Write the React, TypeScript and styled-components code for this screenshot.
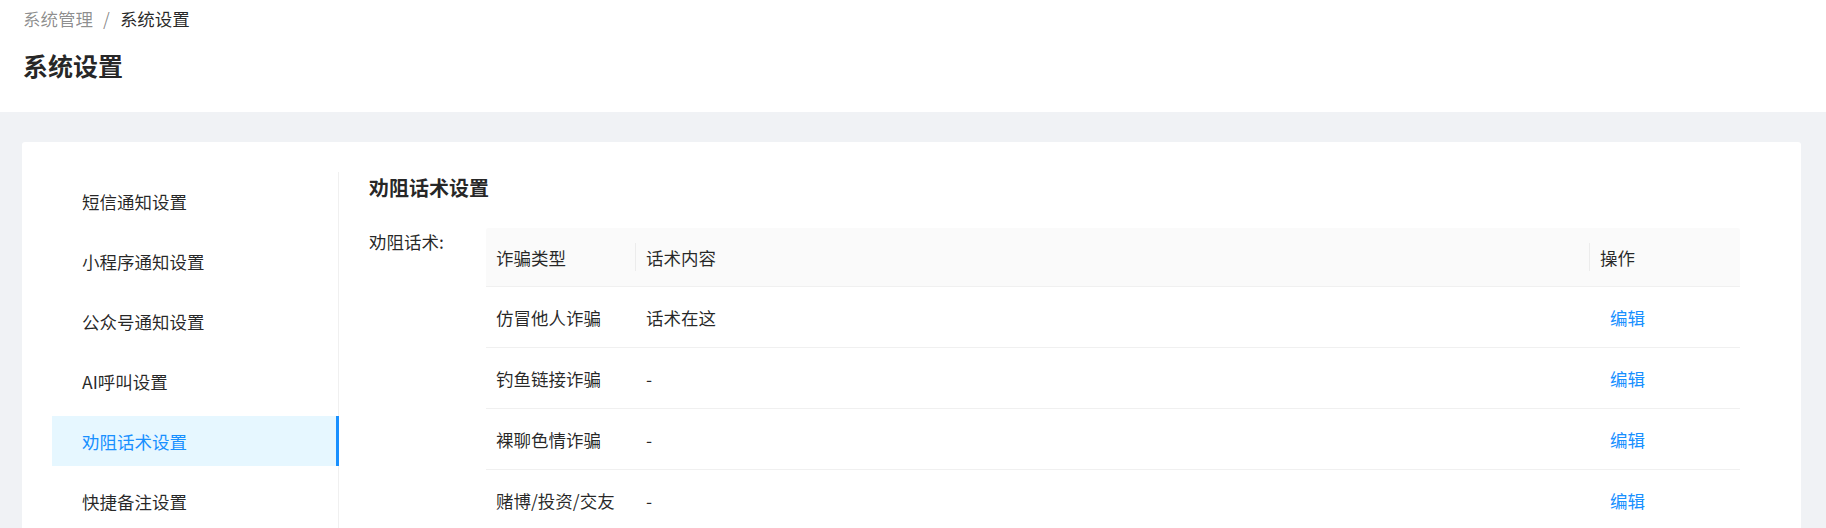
import React from "react";
import styled, { createGlobalStyle } from "styled-components";

const Global = createGlobalStyle`
  html, body { margin: 0; padding: 0; }
  body {
    background: #f0f2f5;
    font-family: "Noto Sans CJK SC", "Noto Sans", sans-serif;
    color: rgba(0,0,0,0.85);
    overflow: hidden;
  }
  * { box-sizing: border-box; }
`;

const Header = styled.header`
  background: #fff;
  height: 112px;
  padding: 5px 23px 0;
`;

const Breadcrumb = styled.div`
  display: flex;
  align-items: center;
  font-size: 17.5px;
  line-height: 27px;
`;

const Crumb = styled.span<{ $current?: boolean }>`
  color: ${(p) => (p.$current ? "rgba(0,0,0,0.85)" : "rgba(0,0,0,0.45)")};
`;

const CrumbSep = styled.span`
  color: rgba(0,0,0,0.45);
  margin: 0 10px;
`;

const PageTitle = styled.h1`
  margin: 16px 0 0;
  font-size: 25px;
  line-height: 35px;
  font-weight: 700;
  color: rgba(0,0,0,0.85);
`;

const Main = styled.main`
  padding: 30px 25px 0 22px;
`;

const Card = styled.section`
  background: #fff;
  border-radius: 3px;
  padding: 30px 61px 0 30px;
  display: flex;
  min-height: 400px;
`;

const Menu = styled.nav`
  width: 287px;
  border-right: 1px solid #f0f0f0;
  display: flex;
  flex-direction: column;
  gap: 10px;
  padding-top: 4px;
  flex-shrink: 0;
`;

const MenuItem = styled.div<{ $active?: boolean }>`
  height: 50px;
  display: flex;
  align-items: center;
  padding-left: 30px;
  margin-right: -1px;
  font-size: 17.5px;
  color: ${(p) => (p.$active ? "#1890ff" : "rgba(0,0,0,0.85)")};
  background: ${(p) => (p.$active ? "#e6f7ff" : "transparent")};
  border-right: 3px solid ${(p) => (p.$active ? "#1890ff" : "transparent")};
`;

const Content = styled.div`
  flex: 1;
  padding-left: 30px;
`;

const SectionTitle = styled.h2`
  margin: 2px 0 0;
  font-size: 20px;
  line-height: 28px;
  font-weight: 700;
  color: rgba(0,0,0,0.85);
`;

const FormRow = styled.div`
  display: flex;
  margin-top: 26px;
`;

const Label = styled.div`
  width: 117px;
  flex-shrink: 0;
  font-size: 17.5px;
  line-height: 27px;
  color: rgba(0,0,0,0.85);
`;

const Table = styled.div`
  flex: 1;
  display: grid;
  grid-template-columns: 149px 1fr 151px;
`;

const HeadCell = styled.div<{ $sep?: boolean }>`
  position: relative;
  background: #fafafa;
  height: 59px;
  border-bottom: 1px solid #f0f0f0;
  display: flex;
  align-items: center;
  padding-left: 11px;
  font-size: 17.5px;
  color: rgba(0,0,0,0.85);
  &:first-child { border-top-left-radius: 3px; padding-left: 10px; }
  &:nth-child(3) { border-top-right-radius: 3px; }
  ${(p) =>
    p.$sep
      ? `&::before {
    content: "";
    position: absolute;
    left: 0;
    top: 50%;
    transform: translateY(-50%);
    width: 1px;
    height: 28px;
    background: #ececec;
  }`
      : ""}
`;

const Cell = styled.div<{ $first?: boolean }>`
  height: 61px;
  border-bottom: 1px solid #f0f0f0;
  display: flex;
  align-items: center;
  padding-left: ${(p) => (p.$first ? "10px" : "11px")};
  font-size: 17.5px;
  color: rgba(0,0,0,0.85);
`;

const EditLink = styled.a`
  color: #1890ff;
  padding-left: 10px;
  cursor: pointer;
  text-decoration: none;
`;

const menuItems = [
  "短信通知设置",
  "小程序通知设置",
  "公众号通知设置",
  "AI呼叫设置",
  "劝阻话术设置",
  "快捷备注设置",
];

const rows = [
  { type: "仿冒他人诈骗", content: "话术在这" },
  { type: "钓鱼链接诈骗", content: "-" },
  { type: "裸聊色情诈骗", content: "-" },
  { type: "赌博/投资/交友", content: "-" },
];

export default function App() {
  return (
    <>
      <Global />
      <Header>
        <Breadcrumb>
          <Crumb>系统管理</Crumb>
          <CrumbSep>/</CrumbSep>
          <Crumb $current>系统设置</Crumb>
        </Breadcrumb>
        <PageTitle>系统设置</PageTitle>
      </Header>
      <Main>
        <Card>
          <Menu>
            {menuItems.map((m) => (
              <MenuItem key={m} $active={m === "劝阻话术设置"}>
                {m}
              </MenuItem>
            ))}
          </Menu>
          <Content>
            <SectionTitle>劝阻话术设置</SectionTitle>
            <FormRow>
              <Label>劝阻话术:</Label>
              <Table>
                <HeadCell>诈骗类型</HeadCell>
                <HeadCell $sep>话术内容</HeadCell>
                <HeadCell $sep>操作</HeadCell>
                {rows.map((r) => (
                  <React.Fragment key={r.type}>
                    <Cell $first>{r.type}</Cell>
                    <Cell>{r.content}</Cell>
                    <Cell>
                      <EditLink>编辑</EditLink>
                    </Cell>
                  </React.Fragment>
                ))}
              </Table>
            </FormRow>
          </Content>
        </Card>
      </Main>
    </>
  );
}
